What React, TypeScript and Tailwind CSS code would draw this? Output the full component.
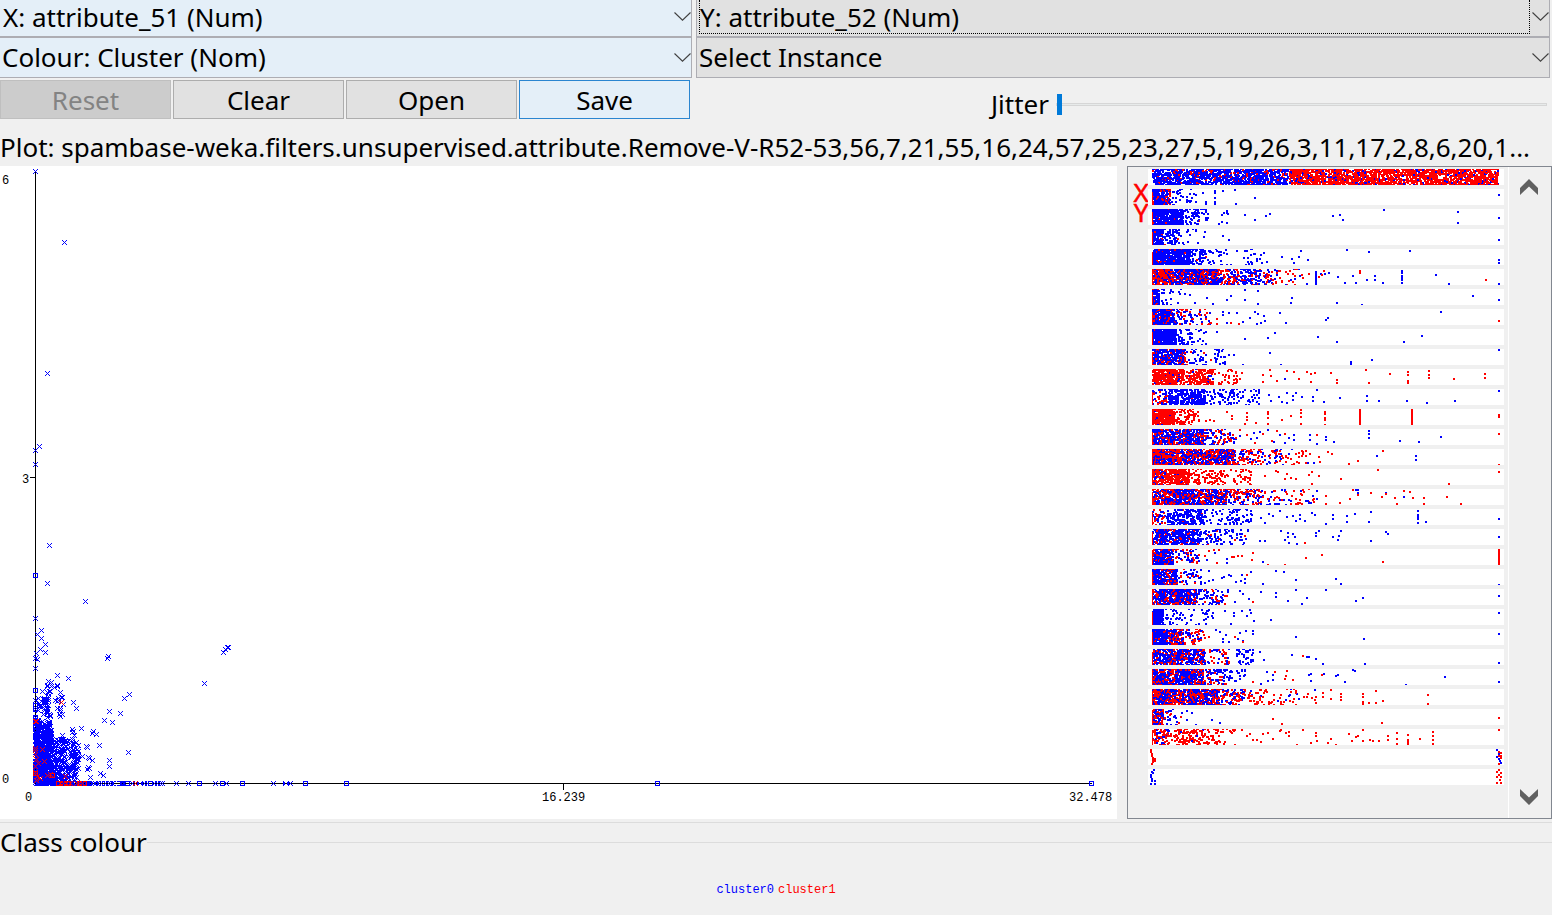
import { useMemo, useState } from "react";
import type { ReactNode } from "react";

type Band = [x0: number, x1: number, coverage: number, redShare: number];
type Dot = [x: number, y: number];
type Strip = { bands: Band[]; blue?: Dot[]; red?: Dot[]; edge?: boolean };

const BLUE = "#0000ff";
const RED = "#ff0000";

function createRandom(seed: number) {
  let state = seed;
  return () => {
    state = (state * 1664525 + 1013904223) % 4294967296;
    return state / 4294967296;
  };
}

const column = (x: number, ys: number[]): Dot[] => ys.map((y) => [x, y]);

const STRIPS: Strip[] = [
  { bands: [[4, 141, 0.88, 0.13], [141, 351, 0.9, 0.88]] },
  {
    edge: true,
    bands: [[4, 12, 0.98, 0.08], [12, 23, 0.93, 0.28], [23, 36, 0.3, 0.02], [36, 50, 0.2, 0]],
    blue: [[54, 3], [57, 14], [57, 12], ...column(66, [1, 3, 8, 12, 14]), [74, 1], [86, 0], [87, 14], [106, 8], [350, 5]],
  },
  {
    edge: true,
    bands: [[4, 36, 0.97, 0.05], [36, 52, 0.55, 0.02], [52, 62, 0.3, 0]],
    blue: [[70, 14], [73, 5], [73, 12], [78, 1], [79, 4], [78, 13], [75, 3], [78, 3], [96, 5], [106, 10], [117, 6], [121, 4], [184, 6], [191, 5], [194, 10], [235, 0], [309, 2], [309, 13], [350, 8]],
  },
  {
    edge: true,
    bands: [[4, 16, 0.97, 0.03], [16, 32, 0.6, 0.01], [32, 52, 0.14, 0]],
    blue: [[56, 2], [55, 7], [74, 6], [80, 10], [350, 10]],
  },
  {
    edge: true,
    bands: [[4, 43, 0.97, 0.07], [43, 59, 0.6, 0.02], [59, 84, 0.25, 0], [97, 118, 0.2, 0]],
    blue: [[88, 1], [95, 8], [96, 1], [118, 12], [133, 7], [143, 9], [145, 13], [150, 7], [152, 1], [159, 10], [198, 0], [220, 2], [261, 1], [350, 10], [350, 13]],
  },
  {
    edge: true,
    bands: [[4, 26, 0.97, 0.65], [26, 72, 0.95, 0.35], [72, 92, 0.7, 0.5], [92, 114, 0.65, 0.2], [114, 130, 0.45, 0.4], [130, 156, 0.2, 0.7]],
    blue: [[158, 14], ...column(167, [2, 4, 6, 8, 10, 12, 14]), [172, 4], [176, 4], [180, 3], [189, 7], [196, 13], [204, 6], [207, 13], [218, 10], [226, 6], [226, 10], [234, 13], ...column(253, [1, 3, 6, 8, 10, 13]), [287, 5], [300, 14], [350, 14]],
    red: [[154, 8], [160, 4], [170, 7], [173, 5], [175, 1], [211, 1], [211, 3], [337, 10]],
  },
  {
    edge: true,
    bands: [[4, 12, 0.97, 0.08], [12, 24, 0.3, 0], [24, 34, 0.12, 0]],
    blue: [[36, 4], [41, 5], [46, 13], [58, 8], [64, 14], [78, 10], [82, 6], [96, 0], [96, 10], [109, 1], [109, 14], [142, 13], [143, 8], [188, 13], [213, 15], [324, 6], [350, 10]],
  },
  {
    edge: true,
    bands: [[4, 27, 0.96, 0.17], [27, 46, 0.5, 0.35], [46, 64, 0.3, 0.4]],
    blue: [[74, 2], [74, 5], [78, 13], [80, 3], [88, 3], [94, 12], [101, 8], [106, 2], [109, 4], [108, 14], [112, 13], [115, 6], [116, 11], [131, 3], [137, 13], [177, 10], [179, 8], [292, 2]],
    red: [[68, 14], [68, 9], [82, 13], [90, 14], [350, 11]],
  },
  {
    edge: true,
    bands: [[4, 29, 0.99, 0.01], [29, 45, 0.45, 0], [45, 59, 0.18, 0]],
    blue: [[68, 2], [96, 9], [119, 8], [126, 3], [169, 7], [188, 12], [255, 12], [273, 6]],
  },
  {
    edge: true,
    bands: [[4, 38, 0.93, 0.25], [38, 60, 0.32, 0.2], [66, 78, 0.35, 0]],
    blue: [[80, 5], [85, 5], [94, 15], [121, 3], [132, 15], [202, 12], [202, 14], [223, 10], [350, 0]],
    red: [[62, 10]],
  },
  {
    bands: [[4, 37, 0.92, 0.94], [37, 66, 0.75, 0.97], [66, 95, 0.25, 1]],
    red: [[114, 5], [114, 12], [122, 6], [121, 0], [128, 11], [138, 1], [145, 2], [150, 9], [158, 2], [162, 4], [162, 12], [166, 3], [182, 3], [188, 10], [188, 13], [217, 0], [220, 13], [241, 4], [259, 2], [259, 5], [259, 11], [259, 13], [280, 1], [280, 5], [280, 8], [305, 9], [336, 4], [336, 8]],
    blue: [[136, 9]],
  },
  {
    edge: true,
    bands: [[4, 20, 0.55, 0.45], [20, 58, 0.82, 0.01], [58, 88, 0.38, 0], [88, 112, 0.28, 0]],
    blue: [[120, 5], [122, 11], [130, 7], [133, 12], [138, 3], [138, 13], [144, 6], [144, 10], [147, 3], [153, 7], [164, 7], [164, 11], [168, 0], [175, 12], [191, 8], [218, 6], [218, 11], [230, 11], [258, 11], [278, 13], [306, 11], [350, 1]],
  },
  {
    edge: true,
    bands: [[4, 28, 0.97, 0.93], [28, 52, 0.5, 0.98]],
    red: [[57, 11], [61, 10], [65, 11], [78, 2], [83, 6], [83, 9], [98, 3], [98, 7], [98, 10], [96, 14], [107, 13], ...column(119, [2, 4, 8, 14]), [133, 10], [142, 6], ...column(152, [0, 3, 7, 14]), ...column(176, [2, 4, 8, 10, 15]), ...column(211, [0, 2, 4, 6, 8, 10, 12, 14]), ...column(263, [0, 2, 4, 6, 8, 10, 12, 14]), [350, 5], [350, 7]],
  },
  {
    edge: true,
    bands: [[4, 56, 0.92, 0.3], [56, 84, 0.55, 0.5], [84, 94, 0.2, 0.4]],
    blue: [[102, 9], [105, 3], [108, 8], [111, 2], [119, 0], [125, 12], [131, 5], [136, 13], [140, 8], [145, 5], [145, 10], [161, 5], [161, 10], [168, 14], [177, 7], [177, 10], [185, 12], [220, 1], [220, 4], [220, 8], [251, 11], [270, 12], [292, 7]],
    red: [[98, 5], [106, 13], [114, 4], [123, 11], [128, 1], [136, 4], [168, 5], [350, 4]],
  },
  {
    edge: true,
    bands: [[4, 32, 0.96, 0.62], [32, 88, 0.94, 0.45], [88, 116, 0.5, 0.6], [116, 136, 0.35, 0.5], [136, 156, 0.2, 0.8]],
    red: [[157, 1], [157, 6], [157, 13], [161, 4], [170, 7], [171, 12], [179, 2], [183, 4], [200, 14], [209, 11], [234, 1], [350, 15]],
    blue: [[159, 13], [165, 13], [228, 6], [267, 6], [267, 10]],
  },
  {
    edge: true,
    bands: [[4, 16, 0.9, 0.7], [16, 42, 0.92, 0.97], [42, 78, 0.45, 1], [78, 106, 0.26, 1]],
    red: [[116, 6], [127, 1], [129, 2], [136, 9], [138, 4], [142, 8], [147, 9], [160, 5], [163, 2], [163, 14], [170, 6], [192, 9], [229, 0], [300, 14], [350, 2]],
  },
  {
    edge: true,
    bands: [[4, 80, 0.9, 0.45], [80, 112, 0.6, 0.55], [112, 140, 0.28, 0.4], [140, 168, 0.22, 0.75]],
    red: [[177, 6], [177, 14], [191, 13], [201, 9], [204, 0], [209, 5], [222, 3], [233, 7], [237, 4], [246, 8], [248, 14], [255, 1], [261, 2], [264, 8], [275, 8], [275, 14], [298, 7], [312, 14]],
    blue: [[168, 1], [168, 9], [207, 0], [209, 0], [209, 3], [237, 3], [255, 7]],
  },
  {
    edge: true,
    bands: [[4, 18, 0.5, 0.45], [18, 60, 0.7, 0.05], [60, 105, 0.32, 0]],
    blue: [[112, 8], [116, 13], [120, 4], [124, 6], [131, 1], [138, 7], [144, 6], [147, 11], [151, 5], [151, 9], [156, 11], [163, 3], [166, 5], [177, 14], [184, 5], [184, 9], [198, 6], [198, 12], [206, 4], [222, 2], [220, 12], ...column(269, [1, 5, 7, 9, 13]), [277, 12], [350, 9]],
  },
  {
    edge: true,
    bands: [[4, 54, 0.87, 0.16], [54, 90, 0.4, 0.08], [90, 104, 0.18, 0]],
    blue: [[111, 11], [116, 11], [132, 1], [136, 10], [139, 3], [139, 7], [140, 13], [144, 4], [146, 7], [148, 14], [167, 6], [167, 3], [170, 1], [184, 7], [189, 10], [192, 1], [190, 6], [222, 11], [237, 2], [239, 4], [350, 7]],
    red: [[96, 6], [156, 13]],
  },
  {
    edge: true,
    bands: [[4, 26, 0.95, 0.3], [26, 52, 0.4, 0.5]],
    blue: [[58, 10], [66, 3], [78, 9], [78, 13], [114, 12]],
    red: [[56, 6], [60, 1], [65, 0], [70, 0], [68, 13], [83, 7], [85, 7], [89, 6], [93, 6], [104, 3], [103, 10], [119, 15], [136, 15], [157, 8], [173, 5], [234, 12], ...column(350, [0, 2, 4, 6, 8, 10, 12, 14])],
  },
  {
    edge: true,
    bands: [[4, 30, 0.93, 0.25], [30, 54, 0.35, 0.2]],
    blue: [[56, 13], [60, 1], [60, 11], [64, 10], [73, 8], [75, 7], [80, 5], [82, 6], [87, 12], [92, 11], [93, 5], [96, 9], [96, 13], [102, 2], [114, 14], [127, 1], [135, 2], [147, 10], [187, 9], [192, 14], [350, 15]],
    red: [[98, 5]],
  },
  {
    edge: true,
    bands: [[4, 50, 0.9, 0.28], [50, 72, 0.45, 0.2], [72, 82, 0.25, 0.2]],
    blue: [[86, 12], [91, 1], [94, 4], [100, 9], [112, 2], [127, 3], [127, 7], [139, 11], [147, 0], [158, 8], [153, 14], [177, 0], [207, 11], [214, 8], [350, 6]],
    red: [[78, 6], [104, 12]],
  },
  {
    edge: true,
    bands: [[4, 16, 0.98, 0.01], [16, 30, 0.35, 0], [30, 66, 0.2, 0]],
    blue: [[76, 1], [82, 14], [85, 3], [85, 6], [93, 1], [98, 6], [101, 0], [102, 3], [105, 11], [122, 10], [350, 3]],
  },
  {
    edge: true,
    bands: [[4, 20, 0.97, 0.08], [20, 36, 0.92, 0.45], [36, 58, 0.45, 0.6]],
    blue: [[67, 0], [71, 2], [74, 9], [74, 12], [77, 5], [80, 12], [89, 9], [91, 3], [94, 11], [97, 1], [104, 1], [104, 4], [147, 7], [215, 9], [350, 4]],
    red: [[60, 7], [86, 7], [94, 12]],
  },
  {
    edge: true,
    bands: [[4, 58, 0.87, 0.28], [58, 82, 0.35, 0.5], [87, 106, 0.4, 0]],
    blue: [[111, 2], [115, 10], [143, 5], [158, 7], [160, 7], [167, 9], [174, 14], [216, 14], [350, 13]],
    red: [[154, 6]],
  },
  {
    edge: true,
    bands: [[4, 56, 0.94, 0.35], [56, 80, 0.55, 0.4], [80, 100, 0.25, 0.1]],
    blue: [[112, 14], [118, 2], [119, 11], [124, 5], [124, 10], [160, 5], [162, 4], [162, 11], [175, 4], [187, 6], [189, 5], [196, 12], [204, 0], [206, 1], [257, 15], [296, 7], [350, 12]],
    red: [[104, 12], [126, 2], [138, 1], [137, 6], [136, 9], [144, 10], [173, 5]],
  },
  {
    edge: true,
    bands: [[4, 72, 0.93, 0.5], [72, 98, 0.6, 0.5], [98, 120, 0.35, 0.9], [120, 150, 0.22, 0.9]],
    red: [[155, 7], [158, 7], [159, 4], [163, 8], [166, 10], [167, 13], [167, 7], [174, 3], [174, 7], [182, 0], [182, 9], ...column(192, [4, 7, 10]), ...column(214, [4, 7, 12, 14]), [220, 13], [227, 1], [227, 13], [234, 11], [279, 5], [279, 14]],
    blue: [[150, 9], [166, 0]],
  },
  {
    edge: true,
    bands: [[4, 16, 0.9, 0.45], [16, 30, 0.35, 0.3]],
    blue: [[33, 3], [38, 10], [38, 1], [43, 3], [47, 15], [63, 10], [71, 13]],
    red: [[32, 7], [30, 13], [124, 9], [133, 14], [233, 13], [350, 8]],
  },
  {
    edge: true,
    bands: [[4, 22, 0.65, 0.7], [22, 62, 0.55, 0.93], [62, 90, 0.25, 1]],
    red: [[93, 0], [98, 6], [101, 4], [104, 10], [108, 10], [112, 12], [114, 4], [119, 3], [124, 9], [131, 1], [132, 0], [137, 3], [140, 6], [140, 2], [148, 15], [154, 0], [162, 13], [167, 3], [167, 6], [168, 11], [179, 13], [182, 9], [187, 15], [200, 4], [203, 11], [207, 7], [209, 6], [214, 0], [214, 11], [221, 10], [224, 11], [230, 11], [239, 6], [239, 10], [248, 3], [248, 9], [248, 14], ...column(259, [5, 10, 12, 14]), [271, 9], ...column(284, [2, 6, 10, 14]), [350, 0]],
  },
  {
    bands: [],
    red: [[2, 0], [2, 2], [3, 4], [3, 6], [4, 8], [4, 10], [6, 9], [6, 11], [4, 12], [3, 14], [352, 3], [350, 2], [350, 6], [352, 6], [352, 8], [350, 14]],
    blue: [[348, 0], [350, 4], [348, 7], [350, 9], [351, 11], [352, 13]],
  },
  {
    bands: [],
    blue: [[5, 0], [4, 3], [3, 2], [2, 5], [2, 7], [3, 9], [3, 11], [6, 11], [2, 14], [6, 14]],
    red: [[350, 0], [348, 2], [352, 3], [350, 5], [348, 7], [352, 7], [351, 10], [352, 13], [348, 13]],
  },
];

const STRIP_WIDTH = 356;
const STRIP_HEIGHT = 16;

function AttributeStrip({ strip, index }: { strip: Strip; index: number }) {
  const paths = useMemo(() => {
    const random = createRandom(index * 7919 + 17);
    const pixels = new Uint8Array(STRIP_WIDTH * STRIP_HEIGHT);
    const stamp = (x: number, y: number, colour: number) => {
      for (let dy = 0; dy < 2; dy++) {
        for (let dx = 0; dx < 2; dx++) {
          if (y + dy >= 0 && y + dy < STRIP_HEIGHT) pixels[(y + dy) * STRIP_WIDTH + x + dx] = colour;
        }
      }
    };

    strip.bands.forEach(([x0, x1, coverage, redShare]) => {
      const count = Math.round((-Math.log(1 - coverage) * (x1 - x0) * STRIP_HEIGHT) / 4);
      for (let i = 0; i < count; i++) {
        const x = x0 + Math.floor(random() * (x1 - x0 - 1));
        const y = Math.floor(random() * 17) - 1;
        stamp(x, y, random() < redShare ? 2 : 1);
      }
    });
    strip.blue?.forEach(([x, y]) => stamp(x, y, 1));
    strip.red?.forEach(([x, y]) => stamp(x, y, 2));
    if (strip.edge) for (let y = 3; y < STRIP_HEIGHT; y++) pixels[y * STRIP_WIDTH + 4] = 2;

    const runs = ["", "", ""];
    for (let y = 0; y < STRIP_HEIGHT; y++) {
      for (let x = 0; x < STRIP_WIDTH; ) {
        const colour = pixels[y * STRIP_WIDTH + x];
        let end = x + 1;
        while (end < STRIP_WIDTH && pixels[y * STRIP_WIDTH + end] === colour) end++;
        if (colour) runs[colour] += `M${x} ${y}h${end - x}v1h${x - end}z`;
        x = end;
      }
    }
    return runs;
  }, [strip, index]);

  return (
    <svg viewBox="0 0 356 16" className="block h-4 w-full bg-white" shapeRendering="crispEdges" aria-hidden="true">
      <path d={paths[1]} fill={BLUE} />
      <path d={paths[2]} fill={RED} />
    </svg>
  );
}

type Point = [x: number, y: number];

const crossPath = ([x, y]: Point) =>
  [-2, -1, 0, 1, 2]
    .map((k) => `M${x + k} ${y + k}h1v1h-1z` + (k ? `M${x + k} ${y - k}h1v1h-1z` : ""))
    .join("");
const boxPath = ([x, y]: Point) => `M${x - 2} ${y - 2}h5v5h-5zM${x - 1} ${y - 1}v3h3v-3z`;

const CROSSES: Point[] = [
  [35, 5], [64, 76], [47, 207], [39, 280], [35, 284], [35, 298], [49, 379], [47, 417], [85, 435], [35, 452],
  [41, 464], [37, 468], [41, 472], [45, 478], [40, 483], [45, 486], [36, 487], [35, 492], [37, 493], [35, 502],
  [57, 509], [68, 512], [107, 492], [108, 490], [223, 486], [225, 483], [227, 481], [228, 481], [204, 517],
  [129, 528], [124, 532], [109, 545], [120, 547], [104, 554], [112, 556], [73, 536], [76, 542], [128, 586],
  [99, 579], [109, 594], [109, 600], [100, 607], [103, 609], [81, 562], [93, 565], [92, 567], [96, 568],
  [72, 563], [72, 566], [74, 569], [73, 565], [62, 569], [86, 580], [87, 581], [88, 591], [92, 594], [89, 592],
  [88, 601], [87, 603], [89, 602], [90, 611], [82, 590], [77, 583], [42, 525], [60, 526], [57, 520], [48, 515],
  [290, 617], [273, 617], [226, 617], [215, 617], [188, 617], [176, 617], [162, 617], [160, 617], [157, 617],
  [154, 617], [147, 617], [144, 617], [132, 617],
];

const BOXES: Point[] = [
  [35, 409], [35, 524], [35, 539], [35, 543], [35, 551], [35, 570], [35, 582], [1091, 617], [657, 617],
  [346, 617], [305, 617], [285, 617], [286, 617], [242, 617], [222, 617], [199, 617], [140, 617], [127, 617],
  [118, 617], [114, 617], [111, 617], [107, 617], [103, 617], [99, 617], [96, 617], [93, 617], [90, 617],
  [87, 617], [83, 617], [123, 617], [139, 617], [150, 617],
];

const CLOUDS: { x: number; width: number; base: number; height: number; taper: number; count: number }[] = [
  { x: 35, width: 16, base: 617, height: 62, taper: 1.1, count: 400 },
  { x: 35, width: 16, base: 575, height: 44, taper: 1, count: 50 },
  { x: 50, width: 14, base: 617, height: 46, taper: 1.2, count: 150 },
  { x: 64, width: 14, base: 617, height: 44, taper: 1.1, count: 90 },
  { x: 70, width: 9, base: 605, height: 34, taper: 1, count: 16 },
  { x: 44, width: 4, base: 548, height: 17, taper: 1, count: 18 },
  { x: 46, width: 6, base: 533, height: 18, taper: 1, count: 11 },
  { x: 50, width: 9, base: 521, height: 5, taper: 1, count: 3 },
  { x: 55, width: 10, base: 550, height: 20, taper: 1, count: 14 },
  { x: 47, width: 5, base: 576, height: 20, taper: 1, count: 22 },
  { x: 35, width: 1, base: 617, height: 80, taper: 1, count: 30 },
  { x: 36, width: 50, base: 617, height: 1, taper: 1, count: 28 },
  { x: 86, width: 40, base: 617, height: 1, taper: 1, count: 12 },
];

const RED_CROSSES: Point[] = [
  [61, 536], [35, 555], [36, 555], [35, 582], [42, 583], [35, 588], [36, 593], [44, 595], [38, 597], [35, 600],
  [37, 610], [36, 614], [40, 612], [47, 609], [135, 617], [60, 617], [63, 617], [66, 617], [70, 617], [76, 617],
  [79, 617], [82, 617], [35, 584], [50, 608], [65, 610], [35, 606],
];
const RED_BOXES: Point[] = [[52, 609], [35, 607], [58, 617], [68, 617], [80, 617], [84, 617]];

function ScatterPlot() {
  const cloud = useMemo(() => {
    const random = createRandom(52);
    return CLOUDS.flatMap(({ x, width, base, height, taper, count }) =>
      Array.from({ length: count }, () =>
        crossPath([x + Math.floor(random() * width), base - Math.floor(Math.pow(random(), taper) * height)]),
      ),
    ).join("");
  }, []);

  return (
    <svg
      viewBox="0 0 1117 653"
      className="block w-full bg-white font-['Liberation_Mono',monospace] text-[12px]"
      shapeRendering="crispEdges"
      role="img"
      aria-label="attribute_51 against attribute_52"
    >
      <path d="M35 5h1v613h-1zM35 617h1057v1h-1057zM30 311h5v1h-5zM563 618h1v6h-1z" fill="black" />
      <path d={cloud + CROSSES.map(crossPath).join("")} fill={BLUE} />
      <path d={BOXES.map(boxPath).join("")} fill={BLUE} fillRule="evenodd" />
      <path d={RED_CROSSES.map(crossPath).join("")} fill={RED} />
      <path d={RED_BOXES.map(boxPath).join("")} fill={RED} fillRule="evenodd" />
      <text x="2" y="18">6</text>
      <text x="22" y="317">3</text>
      <text x="2" y="617">0</text>
      <text x="25" y="635">0</text>
      <text x="542" y="635">16.239</text>
      <text x="1069" y="635">32.478</text>
    </svg>
  );
}

function Combo({ label, options, look, focused }: { label: string; options: string[]; look: string; focused?: boolean }) {
  return (
    <div className="relative">
      <select
        aria-label={label}
        className={`block w-full appearance-none truncate rounded-none border-[#adadb3] pr-6 text-black outline-none ${look}`}
      >
        {options.map((o) => (
          <option key={o}>{o}</option>
        ))}
      </select>
      {focused && (
        <span className="pointer-events-none absolute bottom-[3px] left-[3px] right-5 top-0 border border-t-0 border-dotted border-black" />
      )}
      <svg viewBox="0 0 17 9" className="pointer-events-none absolute bottom-4 right-px h-[9px] w-[17px]" aria-hidden="true">
        <path d="M0.5 0.5L8.5 8.2L16.5 0.5" fill="none" stroke="#404040" strokeWidth="1.1" />
      </svg>
    </div>
  );
}

function ToolButton({ children, look, disabled }: { children: ReactNode; look: string; disabled?: boolean }) {
  return (
    <button type="button" disabled={disabled} className={`h-[39px] border text-center leading-9 ${look}`}>
      {children}
    </button>
  );
}

export default function App() {
  const [jitter, setJitter] = useState(0);

  return (
    <main className="flex min-h-screen flex-col overflow-hidden bg-[#f0f0f0] font-['Noto_Sans',sans-serif] text-[26px] leading-8 text-black">
      <div className="grid grid-cols-[692fr_854fr] gap-x-1 pr-0.5">
        <Combo label="X axis" options={["X: attribute_51 (Num)"]} look="h-[37px] border-b border-r bg-[#e4eff8] pb-[3px] pl-[3px]" />
        <Combo label="Y axis" options={["Y: attribute_52 (Num)"]} look="h-[37px] border-x border-b bg-[#e1e1e1] pb-[3px] pl-[3px]" focused />
        <Combo label="Colour" options={["Colour: Cluster (Nom)"]} look="h-[41px] border-y border-r bg-[#e4eff8] pb-px pl-0.5" />
        <Combo label="Instance" options={["Select Instance"]} look="h-[41px] border bg-[#e1e1e1] pb-px pl-0.5" />
        <div className="grid grid-cols-4 gap-0.5 pr-0.5 pt-0.5">
          <ToolButton look="border-[#bfbfbf] bg-[#cccccc] text-[#838383]" disabled>Reset</ToolButton>
          <ToolButton look="border-[#adadad] bg-[#e1e1e1]">Clear</ToolButton>
          <ToolButton look="border-[#adadad] bg-[#e1e1e1]">Open</ToolButton>
          <ToolButton look="border-[#2a85d0] bg-[#e4eff8]">Save</ToolButton>
        </div>
        <div className="grid grid-cols-[353fr_491fr] items-center gap-x-[7px] pr-[3px] pt-2.5">
          <label htmlFor="jitter" className="text-right">Jitter</label>
          <input
            id="jitter"
            type="range"
            min={0}
            max={50}
            value={jitter}
            onChange={(e) => setJitter(Number(e.target.value))}
            className="block h-[21px] w-full appearance-none bg-transparent [&::-webkit-slider-runnable-track]:h-[3px] [&::-webkit-slider-runnable-track]:border [&::-webkit-slider-runnable-track]:border-[#d6d6d6] [&::-webkit-slider-runnable-track]:bg-[#e7eaea] [&::-webkit-slider-thumb]:-mt-2.5 [&::-webkit-slider-thumb]:h-[21px] [&::-webkit-slider-thumb]:w-[5px] [&::-webkit-slider-thumb]:appearance-none [&::-webkit-slider-thumb]:bg-[#007ad9]"
          />
        </div>
      </div>

      <h1 className="overflow-hidden whitespace-nowrap pb-[3px] pt-[11px]">
        Plot: spambase-weka.filters.unsupervised.attribute.Remove-V-R52-53,56,7,21,55,16,24,57,25,23,27,5,19,26,3,11,17,2,8,6,20,1...
      </h1>

      <div className="flex items-start gap-2.5">
        <div className="min-w-0 flex-1">
          <ScatterPlot />
        </div>
        <aside className="flex h-[653px] w-[425px] shrink-0 border border-[#828790]">
          <svg viewBox="0 0 24 72" className="-mr-1 h-[72px] w-6 shrink-0 font-['Noto_Sans',sans-serif] text-[26px]" fill={RED} stroke={RED} strokeWidth="0.5">
            <text x="13" y="35" textAnchor="middle">X</text>
            <text x="13" y="55" textAnchor="middle">Y</text>
          </svg>
          <div className="flex min-w-0 flex-1 flex-col gap-1 pr-1 pt-0.5">
            {STRIPS.map((strip, i) => (
              <AttributeStrip key={i} strip={strip} index={i} />
            ))}
          </div>
          <div className="flex w-[43px] flex-col items-center justify-between border-l border-white pb-[13px] pr-0.5 pt-3">
            <button type="button" aria-label="Scroll up">
              <svg viewBox="0 0 18 16" className="block h-4 w-[18px]" aria-hidden="true">
                <path d="M9 0L18 9V16L9 7.500L0 16V9z" fill="#606060" />
              </svg>
            </button>
            <button type="button" aria-label="Scroll down">
              <svg viewBox="0 0 18 16" className="block h-4 w-[18px]" aria-hidden="true">
                <path d="M9 16L18 7V0L9 8.500L0 0V7z" fill="#606060" />
              </svg>
            </button>
          </div>
        </aside>
      </div>

      <section className="mt-[3px] border-t border-[#dcdcdc] pt-1">
        <fieldset className="min-w-0 border-t border-[#dcdcdc]">
          <legend className="leading-[30px]">Class colour</legend>
          <div className="flex justify-center gap-1 pt-[25px] font-['Liberation_Mono',monospace] text-[12px] leading-4">
            <button type="button" className="text-[#0000ff]">cluster0</button>
            <button type="button" className="text-[#ff0000]">cluster1</button>
          </div>
        </fieldset>
      </section>
    </main>
  );
}
